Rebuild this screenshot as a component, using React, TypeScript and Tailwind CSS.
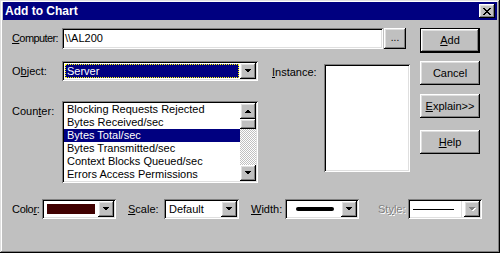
import type { ReactNode } from "react";

const RAISED =
  "shadow-[inset_-1px_-1px_#000,inset_1px_1px_#fff,inset_-2px_-2px_#808080,inset_2px_2px_#dfdfdf]";
const SUNKEN =
  "shadow-[inset_1px_1px_#808080,inset_-1px_-1px_#fff,inset_2px_2px_#000,inset_-2px_-2px_#dfdfdf]";

const COUNTERS = [
  "Blocking Requests Rejected",
  "Bytes Received/sec",
  "Bytes Total/sec",
  "Bytes Transmitted/sec",
  "Context Blocks Queued/sec",
  "Errors Access Permissions",
];

// ── small pieces ─────────────────────────────────────────────────────────────

function Arrow({ up = false, disabled = false }: { up?: boolean; disabled?: boolean }) {
  const pts = up ? "0,4 7,4 3.5,0.5" : "0,0 7,0 3.5,3.5";
  return (
    <svg width="8" height="5" viewBox="0 0 8 5" shapeRendering="crispEdges">
      {disabled && <polygon points={pts} transform="translate(1,1)" fill="#fff" />}
      <polygon points={pts} fill={disabled ? "#808080" : "#000"} />
    </svg>
  );
}

function DropBtn({ disabled = false }: { disabled?: boolean }) {
  return (
    <div className={`w-[16px] h-[16px] shrink-0 bg-[#c0c0c0] flex items-center justify-center ${RAISED}`}>
      <Arrow disabled={disabled} />
    </div>
  );
}

function Combo({
  className,
  children,
  disabled = false,
}: {
  className: string;
  children?: ReactNode;
  disabled?: boolean;
}) {
  return (
    <div className={`h-[20px] p-[2px] flex bg-white ${SUNKEN} ${className}`}>
      <div className="flex-1 min-w-0 flex items-center">{children}</div>
      <DropBtn disabled={disabled} />
    </div>
  );
}

function Btn({
  children,
  className = "",
  isDefault = false,
}: {
  children: ReactNode;
  className?: string;
  isDefault?: boolean;
}) {
  if (isDefault) {
    return (
      <div className={`border border-black ${className}`}>
        <div className={`h-full flex items-center justify-center bg-[#c0c0c0] ${RAISED}`}>
          {children}
        </div>
      </div>
    );
  }
  return (
    <div className={`flex items-center justify-center bg-[#c0c0c0] ${RAISED} ${className}`}>
      {children}
    </div>
  );
}

function U({ children }: { children: ReactNode }) {
  return <span className="underline underline-offset-[1px]">{children}</span>;
}

// ── dialog ───────────────────────────────────────────────────────────────────

export default function App() {
  return (
    <div
      className={`w-[500px] h-[253px] overflow-hidden bg-[#c0c0c0] text-black text-[11px] leading-[13px] font-['Liberation_Sans',Arial,sans-serif] shadow-[inset_-1px_-1px_#000,inset_1px_1px_#dfdfdf,inset_-2px_-2px_#808080,inset_2px_2px_#fff]`}
    >
      {/* Title bar */}
      <div className="mx-[3px] mt-[2px] h-[18px] bg-[#000080] flex items-center justify-between pl-[2px] pr-[2px]">
        <span className="text-white font-bold text-[12px] leading-[14px]">Add to Chart</span>
        <div className={`w-[16px] h-[14px] bg-[#c0c0c0] flex items-center justify-center ${RAISED}`}>
          <svg width="8" height="7" viewBox="0 0 8 7" shapeRendering="crispEdges">
            <path d="M0 0h2v1h-2zM6 0h2v1h-2zM1 1h2v1h-2zM5 1h2v1h-2zM2 2h4v1h-4zM3 3h2v1h-2zM2 4h4v1h-4zM1 5h2v1h-2zM5 5h2v1h-2zM0 6h2v1h-2zM6 6h2v1h-2z" fill="#000" />
          </svg>
        </div>
      </div>

      <div className="flex flex-col pl-[12px] pt-[8px]">
        <div className="flex">
          {/* left area */}
          <div className="flex flex-col w-[398px]">
            <div className="flex items-center h-[21px]">
              <span className="w-[50px] tracking-[-0.6px]">
                <U>C</U>omputer:
              </span>
              <div className={`w-[321px] h-[21px] bg-white flex items-center pl-[3px] ${SUNKEN}`}>
                {"\\\\AL200"}
              </div>
              <Btn className="ml-[1px] w-[22px] h-[21px]">
                <span className="text-[10px] -mt-[2px]">...</span>
              </Btn>
            </div>

            <div className="flex mt-[12px]">
              <div className="flex flex-col w-[246px]">
                <div className="flex items-center h-[20px]">
                  <span className="w-[50px]">
                    O<U>b</U>ject:
                  </span>
                  <Combo className="w-[196px]">
                    <div className="ml-[1px] h-[14px] flex-1 mr-[1px] bg-[#000080] border border-dotted border-[#ffff00] flex items-center pl-[1px] text-white">
                      Server
                    </div>
                  </Combo>
                </div>

                <div className="flex mt-[20px]">
                  <span className="w-[50px] pt-[4px]">
                    Coun<U>t</U>er:
                  </span>
                  <div className={`w-[196px] h-[82px] p-[2px] flex bg-white ${SUNKEN}`}>
                    <div className="flex-1 flex flex-col">
                      {COUNTERS.map((c, i) => (
                        <div
                          key={c}
                          className={`h-[13px] pl-[3px] whitespace-nowrap ${
                            i === 2 ? "bg-[#000080] text-white" : ""
                          }`}
                        >
                          {c}
                        </div>
                      ))}
                    </div>
                    <div className="w-[16px] flex flex-col">
                      <div className={`h-[16px] bg-[#c0c0c0] flex items-center justify-center ${RAISED}`}>
                        <Arrow up />
                      </div>
                      <div className={`h-[10px] bg-[#c0c0c0] ${RAISED}`} />
                      <div className="flex-1 bg-[image:repeating-conic-gradient(#c0c0c0_0_25%,#fff_0_50%)] bg-[length:2px_2px]" />
                      <DropBtn />
                    </div>
                  </div>
                </div>
              </div>

              <span className="ml-[14px] w-[52px] pt-[5px]">
                <U>I</U>nstance:
              </span>
              <div className={`mt-[3px] w-[86px] h-[108px] bg-white ${SUNKEN}`} />
            </div>
          </div>

          {/* buttons */}
          <div className="ml-[10px] flex flex-col w-[60px]">
            <Btn isDefault className="h-[25px]">
              <span>
                <U>A</U>dd
              </span>
            </Btn>
            <Btn className="mt-[8px] h-[24px]">Cancel</Btn>
            <Btn className="mt-[9px] h-[24px]">
              <span>
                <U>E</U>xplain&gt;&gt;
              </span>
            </Btn>
            <Btn className="mt-[12px] h-[24px]">
              <span>
                <U>H</U>elp
              </span>
            </Btn>
          </div>
        </div>

        {/* bottom row */}
        <div className="flex items-center mt-[16px]">
          <span className="w-[30px] tracking-[-0.3px]">
            Colo<U>r</U>:
          </span>
          <Combo className="w-[74px]">
            <div className="ml-[3px] w-[48px] h-[10px] bg-[#400000]" />
          </Combo>

          <span className="ml-[12px] w-[36px]">
            <U>S</U>cale:
          </span>
          <Combo className="w-[75px]">
            <span className="pl-[3px]">Default</span>
          </Combo>

          <span className="ml-[12px] w-[34px]">
            <U>W</U>idth:
          </span>
          <Combo className="w-[74px]">
            <div className="ml-[9px] w-[38px] h-[4px] rounded-full bg-black" />
          </Combo>

          <span className="ml-[19px] w-[30px] text-[#808080] [text-shadow:1px_1px_#fff]">
            St<U>y</U>le:
          </span>
          <Combo className="w-[74px]" disabled>
            <div className="h-full flex-1 flex items-center border-r border-[#dfdfdf] mr-[2px]">
              <div className="ml-[3px] w-[41px] h-[1px] bg-black" />
            </div>
          </Combo>
        </div>
      </div>
    </div>
  );
}
